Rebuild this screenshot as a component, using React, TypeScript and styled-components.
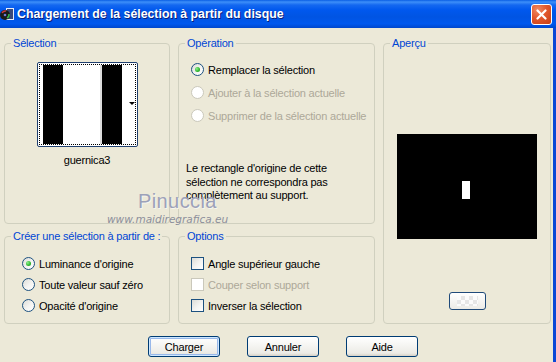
import React from 'react';
import styled, { createGlobalStyle } from 'styled-components';

const GlobalStyle = createGlobalStyle`
  html, body {
    margin: 0;
    padding: 0;
    background: #ECE9D8;
  }
  body {
    font-family: "Liberation Sans", Arial, sans-serif;
    font-size: 11px;
    letter-spacing: -0.2px;
    color: #000;
  }
`;

const Window = styled.div`
  position: relative;
  width: 556px;
  height: 362px;
  overflow: hidden;
  display: flex;
  flex-direction: column;
  background: #ECE9D8;
`;

const TitleBar = styled.div`
  height: 28px;
  flex: none;
  display: flex;
  align-items: center;
  padding-right: 4px;
  background: linear-gradient(
    to bottom,
    #0a5ee4 0,
    #3d8ff9 2px,
    #1468f0 5px,
    #0058ee 10px,
    #0054e3 60%,
    #0058ee 85%,
    #0047cc 100%
  );
`;

const TitleText = styled.span`
  flex: 1;
  margin-left: 3px;
  color: #fff;
  font-family: "Liberation Sans", Arial, sans-serif;
  font-weight: bold;
  font-size: 12.3px;
  letter-spacing: 0;
  text-shadow: 1px 1px 0 #0a1f7a;
  white-space: nowrap;
`;

const CloseButton = styled.div`
  width: 21px;
  height: 21px;
  box-sizing: border-box;
  border: 1px solid #fff;
  border-radius: 3px;
  background: radial-gradient(circle at 30% 25%, #f08a64 0, #e2582d 45%, #c63d14 100%);
  display: flex;
  align-items: center;
  justify-content: center;
`;

const Body = styled.div`
  flex: 1;
  padding: 9px 0 0 4px;
  border-right: 3px solid #0b47d6;
`;

const Panels = styled.div`
  display: grid;
  grid-template-columns: 166px 197px 168px;
  grid-template-rows: 187px 94px;
  column-gap: 8px;
  row-gap: 6px;
`;

const Group = styled.fieldset<{ $span?: boolean }>`
  margin: 0;
  padding: 0;
  min-width: 0;
  border: 1px solid #d0d0bf;
  border-radius: 4px;
  ${(p) => (p.$span ? 'grid-row: 1 / span 2; grid-column: 3;' : '')}
`;

const Legend = styled.legend`
  margin-left: 6px;
  padding: 0 2px;
  color: #0046d5;
  line-height: 13px;
  white-space: nowrap;
`;

const GroupBody = styled.div<{ $pad: number; $top: number }>`
  display: flex;
  flex-direction: column;
  padding-left: ${(p) => p.$pad}px;
  padding-top: ${(p) => p.$top}px;
`;

const Thumb = styled.div`
  position: relative;
  width: 101px;
  height: 85px;
  box-sizing: border-box;
  margin: 3px auto 0;
  border: 1px solid #1f3f6e;
  border-radius: 2px;
  padding: 1px;
  background: #fff;
`;

const FocusRect = styled.div`
  height: 100%;
  box-sizing: border-box;
  border: 1px dotted #000;
  padding: 0 3px 0 3px;
`;

const Stripes = styled.div`
  height: 100%;
  background: linear-gradient(
    to right,
    #000 0 20px,
    #fff 20px 57px,
    #dcdcdc 57px 59px,
    #000 59px 79px,
    #fff 79px
  );
`;

const DropArrow = styled.div`
  position: absolute;
  right: 2px;
  top: 39px;
  width: 0;
  height: 0;
  border-left: 3px solid transparent;
  border-right: 3px solid transparent;
  border-top: 3px solid #000;
`;

const Caption = styled.div`
  margin-top: 7px;
  text-align: center;
  line-height: 13px;
`;

const OptionRow = styled.div<{ $h: number; $disabled?: boolean }>`
  height: ${(p) => p.$h}px;
  display: flex;
  align-items: center;
  gap: 4px;
  color: ${(p) => (p.$disabled ? '#aca899' : '#000')};
  white-space: nowrap;
`;

const RadioDot = styled.span<{ $checked?: boolean; $disabled?: boolean }>`
  width: 13px;
  height: 13px;
  box-sizing: border-box;
  border-radius: 50%;
  flex: none;
  border: 1px solid ${(p) => (p.$disabled ? '#cac8bb' : '#1c5180')};
  background: ${(p) =>
    p.$disabled ? '#fff' : 'linear-gradient(135deg, #dcdcd7 0, #f4f4f2 55%, #fff 100%)'};
  display: flex;
  align-items: center;
  justify-content: center;
  &::after {
    content: '';
    display: ${(p) => (p.$checked ? 'block' : 'none')};
    width: 5px;
    height: 5px;
    border-radius: 50%;
    background: radial-gradient(circle at 35% 35%, #8ef08e 0, #2cb42c 60%, #1a8d1a 100%);
  }
`;

const CheckBox = styled.span<{ $disabled?: boolean }>`
  width: 13px;
  height: 13px;
  box-sizing: border-box;
  flex: none;
  border: 1px solid ${(p) => (p.$disabled ? '#cac8bb' : '#1c5180')};
  background: ${(p) =>
    p.$disabled ? '#fff' : 'linear-gradient(135deg, #dcdcd7 0, #f4f4f2 55%, #fff 100%)'};
`;

const Note = styled.p`
  margin: 35px 0 0 -5px;
  line-height: 13.5px;
`;

const Preview = styled.div`
  position: relative;
  width: 140px;
  height: 105px;
  margin: 84px auto 0;
  background: #000;
`;

const PreviewMark = styled.div`
  position: absolute;
  left: 65px;
  top: 47px;
  width: 8px;
  height: 18px;
  background: #fff;
`;

const SwatchButton = styled.div`
  width: 37px;
  height: 18px;
  box-sizing: border-box;
  margin: 53px auto 0;
  border: 1px solid #1f4a7a;
  border-radius: 3px;
  padding: 3px 7px;
  background: linear-gradient(#ffffff, #ecebe6);
`;

const Checker = styled.div`
  height: 100%;
  background: repeating-conic-gradient(#e6e6e6 0 25%, #fbfbfb 0 50%) 0 0 / 8px 8px;
`;

const ButtonRow = styled.div`
  display: flex;
  gap: 27px;
  margin-top: 12px;
  padding-left: 144px;
`;

const PushButton = styled.div<{ $default?: boolean }>`
  width: 72px;
  height: 21px;
  box-sizing: border-box;
  border: 1px solid #003c74;
  border-radius: 3px;
  display: flex;
  align-items: center;
  justify-content: center;
  background: linear-gradient(#ffffff 0, #f6f6f3 40%, #ecebe6 85%, #d6d0c5 100%);
  box-shadow: ${(p) =>
    p.$default ? 'inset 0 0 0 1px #cee7ff, inset 0 0 0 2px #98b8ea' : 'none'};
`;

const Watermark = styled.div`
  position: absolute;
  left: 107px;
  top: 192px;
  display: flex;
  flex-direction: column;
  align-items: flex-start;
  pointer-events: none;
`;

const WatermarkName = styled.span`
  margin-left: 31px;
  font-family: "Liberation Sans", Arial, sans-serif;
  font-size: 20px;
  letter-spacing: 0.4px;
  line-height: 19px;
  color: #9ca1b9;
  text-shadow: 1px 1px 0 #f6f5ee;
`;

const WatermarkUrl = styled.span`
  margin-top: 2px;
  font-family: "DejaVu Sans", sans-serif;
  font-style: italic;
  font-size: 10.5px;
  letter-spacing: 0;
  line-height: 12px;
  color: #8c8f9b;
`;

const AppIcon = () => (
  <svg width="14" height="14" viewBox="0 0 14 14">
    <rect x="6.5" y="1.5" width="7" height="11" fill="#3a4a7a" stroke="#e8ecf8" />
    <circle cx="5" cy="8" r="5" fill="#1a1a1a" />
    <path d="M2 6 A4 4 0 0 1 6 4" stroke="#c83a3a" strokeWidth="1.5" fill="none" />
    <path d="M7 11 A4 4 0 0 0 9 7" stroke="#3ab84a" strokeWidth="1.5" fill="none" />
    <circle cx="5" cy="8" r="1.3" fill="#6a7ad0" />
  </svg>
);

const CloseIcon = () => (
  <svg width="11" height="11" viewBox="0 0 11 11">
    <path d="M1.5 1.5 L9.5 9.5 M9.5 1.5 L1.5 9.5" stroke="#fff" strokeWidth="2.2" strokeLinecap="round" />
  </svg>
);

const App = () => {
  return (
    <Window>
      <GlobalStyle />
      <TitleBar>
        <AppIcon />
        <TitleText>Chargement de la sélection à partir du disque</TitleText>
        <CloseButton>
          <CloseIcon />
        </CloseButton>
      </TitleBar>
      <Body>
        <Panels>
          <Group>
            <Legend>Sélection</Legend>
            <GroupBody $pad={0} $top={9}>
              <Thumb>
                <FocusRect>
                  <Stripes />
                </FocusRect>
                <DropArrow />
              </Thumb>
              <Caption>guernica3</Caption>
            </GroupBody>
          </Group>

          <Group>
            <Legend>Opération</Legend>
            <GroupBody $pad={12} $top={8}>
              <OptionRow $h={23}>
                <RadioDot $checked />
                Remplacer la sélection
              </OptionRow>
              <OptionRow $h={23} $disabled>
                <RadioDot $disabled />
                Ajouter à la sélection actuelle
              </OptionRow>
              <OptionRow $h={23} $disabled>
                <RadioDot $disabled />
                Supprimer de la sélection actuelle
              </OptionRow>
              <Note>
                Le rectangle d'origine de cette
                <br />
                sélection ne correspondra pas
                <br />
                complètement au support.
              </Note>
            </GroupBody>
          </Group>

          <Group $span>
            <Legend>Aperçu</Legend>
            <GroupBody $pad={0} $top={0}>
              <Preview>
                <PreviewMark />
              </Preview>
              <SwatchButton>
                <Checker />
              </SwatchButton>
            </GroupBody>
          </Group>

          <Group>
            <Legend>Créer une sélection à partir de :</Legend>
            <GroupBody $pad={17} $top={10}>
              <OptionRow $h={21}>
                <RadioDot $checked />
                Luminance d'origine
              </OptionRow>
              <OptionRow $h={21}>
                <RadioDot />
                Toute valeur sauf zéro
              </OptionRow>
              <OptionRow $h={21}>
                <RadioDot />
                Opacité d'origine
              </OptionRow>
            </GroupBody>
          </Group>

          <Group>
            <Legend>Options</Legend>
            <GroupBody $pad={12} $top={10}>
              <OptionRow $h={21}>
                <CheckBox />
                Angle supérieur gauche
              </OptionRow>
              <OptionRow $h={21} $disabled>
                <CheckBox $disabled />
                Couper selon support
              </OptionRow>
              <OptionRow $h={21}>
                <CheckBox />
                Inverser la sélection
              </OptionRow>
            </GroupBody>
          </Group>
        </Panels>

        <ButtonRow>
          <PushButton $default>Charger</PushButton>
          <PushButton>Annuler</PushButton>
          <PushButton>Aide</PushButton>
        </ButtonRow>
      </Body>

      <Watermark>
        <WatermarkName>Pinuccia</WatermarkName>
        <WatermarkUrl>www.maidiregrafica.eu</WatermarkUrl>
      </Watermark>
    </Window>
  );
};

export default App;
